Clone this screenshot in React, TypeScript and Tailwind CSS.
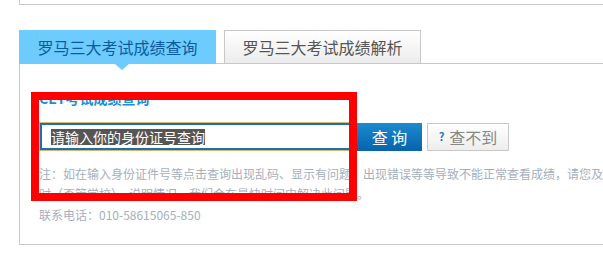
import React from 'react';

const cjk = { fontFamily: '"Noto Sans CJK SC", "Liberation Sans", sans-serif' };

const Tabs = () => (
  <div className="flex items-end gap-[8px] h-[33px] relative z-10">
    <div className="relative w-[197px] h-[34px] -mb-px bg-[#6dcbfd] text-[#0b5c9e] text-[16px] flex items-center justify-center">
      罗马三大考试成绩查询
      <div className="absolute left-[96px] top-[34px] w-0 h-0 border-l-[7px] border-r-[7px] border-t-[6px] border-l-transparent border-r-transparent border-t-[#6dcbfd]" />
    </div>
    <div className="w-[197px] h-[33px] border border-b-0 border-[#c8c8c8] bg-gradient-to-b from-white to-[#ececec] text-[#555] text-[16px] flex items-center justify-center">
      罗马三大考试成绩解析
    </div>
  </div>
);

const SearchRow = () => (
  <div className="flex items-center h-[29px]">
    <div className="w-[313px] h-[29px] border border-[#dcb46e]">
      <div className="w-full h-full border-2 border-[#1572b6] bg-white flex items-center pl-[9px]">
        <span className="bg-[#555] text-white text-[14px] leading-[16px]">请输入你的身份证号查询</span>
      </div>
    </div>
    <button
      type="button"
      className="ml-[5px] w-[65px] h-[28px] bg-gradient-to-b from-[#1c8ad0] to-[#0763ab] text-white text-[16px] flex items-center justify-center"
    >
      查 询
    </button>
    <button
      type="button"
      className="ml-[5px] w-[82px] h-[28px] border border-[#c8c8c8] bg-gradient-to-b from-white to-[#ededed] text-[#888] text-[16px] flex items-center justify-center gap-[5px]"
    >
      <span className="text-[#1a7cc8] text-[11px] font-bold">?</span>
      查不到
    </button>
  </div>
);

export default function App() {
  return (
    <div className="relative w-[603px] h-[258px] overflow-hidden bg-white" style={cjk}>
      <div className="ml-[19px] h-[5px] border-l border-b border-[#c8c8c8]" />
      <div className="ml-[19px] mt-[25px] w-[700px]">
        <Tabs />
        <div className="h-[182px] border border-[#c8c8c8] pl-[19px] pt-[27px]">
          <div className="text-[14px] leading-[15px] font-bold text-[#1a8fd4]">CET考试成绩查询</div>
          <div className="mt-[16px]">
            <SearchRow />
          </div>
          <div className="mt-[13px] text-[12px] leading-[20px] text-[#a5afbc] whitespace-nowrap">
            <div>注：如在输入身份证件号等点击查询出现乱码、显示有问题、出现错误等等导致不能正常查看成绩，请您及</div>
            <div>时（否管学校），说明情况，我们会在最快时间中解决此问题。</div>
            <div className="mt-[1px]">联系电话：010-58615065-850</div>
          </div>
        </div>
      </div>
      <div className="absolute left-[31px] top-[92px] w-[326px] h-[109px] border-8 border-[#ff0000]" />
    </div>
  );
}
